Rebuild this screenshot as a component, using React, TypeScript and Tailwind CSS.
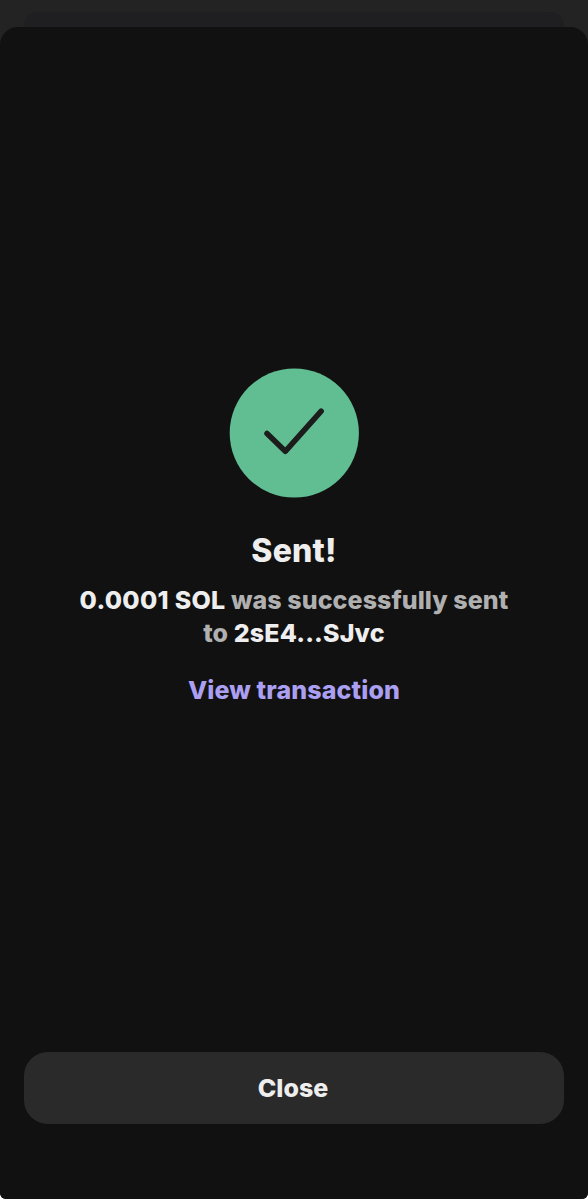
export default function App() {
  return (
    <div className="h-[1199px] w-full bg-white font-['Inter','Liberation_Sans',sans-serif] font-extrabold">
      <div className="flex h-full flex-col overflow-hidden rounded-b-[6px] bg-[#232323] pt-3">
        <div className="mx-6 h-[15px] shrink-0 rounded-t-[14px] bg-[#1f1f21]" />
        <main className="flex flex-1 flex-col items-center rounded-t-[18px] bg-[#111111] px-6 pt-[341px] pb-[75px]">
          <svg width="130" height="130" viewBox="0 0 130 130" fill="none" aria-hidden="true">
            <circle cx="65.3" cy="65" r="64.6" fill="#60be92" />
            <path
              d="M38 65.5L56.3 83.3L92.2 43.2"
              stroke="#1c1c1c"
              strokeWidth="5.5"
              strokeLinecap="round"
              strokeLinejoin="round"
            />
          </svg>
          <h1 className="mt-[33px] text-[32px] leading-10 tracking-[0.2px] whitespace-nowrap text-[#eeeeee]">Sent!</h1>
          <p className="mt-[13px] text-center text-[25px] leading-[33px] tracking-[0.07px] whitespace-nowrap text-[#b0b0b0]">
            <span className="tracking-[0.3px] text-[#eeeeee]">0.0001 SOL</span> was successfully sent
            <br />
            to <span className="tracking-[0.15px] text-[#eeeeee]">2sE4...SJvc</span>
          </p>
          <a href="#" className="mt-6 text-[25px] leading-[33px] tracking-[0.13px] whitespace-nowrap text-[#ab9ff2]">
            View transaction
          </a>
          <button className="mt-auto h-[72px] w-full rounded-[24px] bg-[#2a2a2a] pr-[2px] text-[25px] leading-[33px] text-[#eeeeee]">
            Close
          </button>
        </main>
      </div>
    </div>
  );
}
